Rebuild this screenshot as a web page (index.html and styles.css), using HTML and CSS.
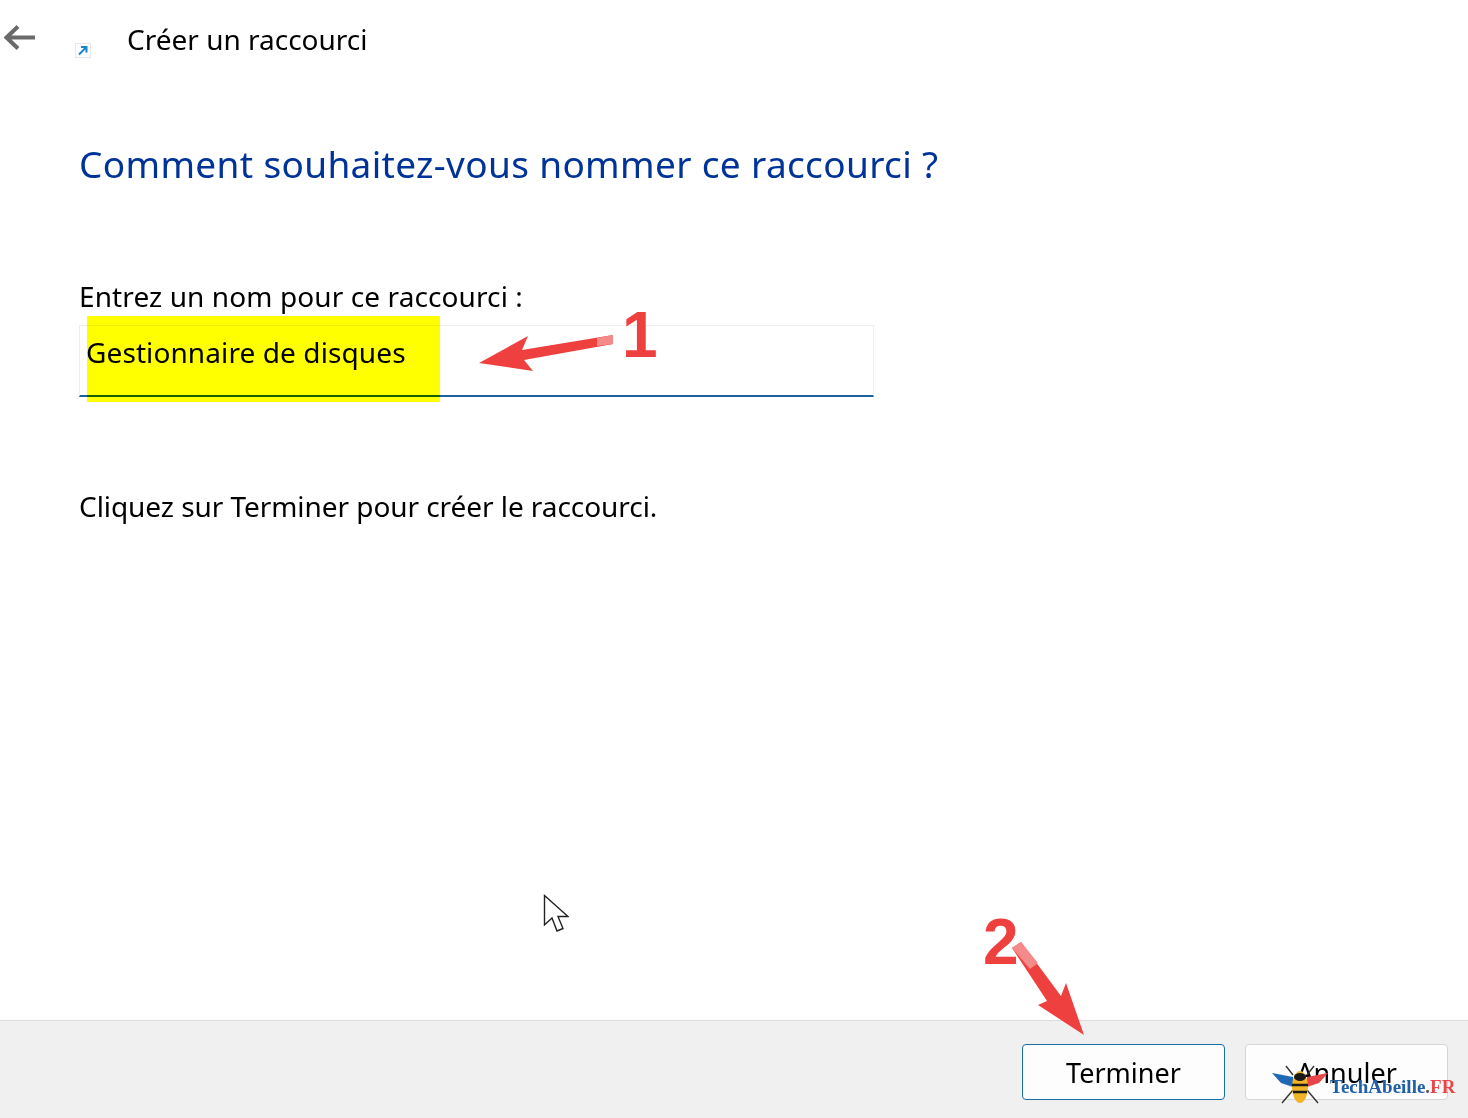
FILE: index.html
```html
<!DOCTYPE html>
<html lang="fr">
<head>
    <meta charset="UTF-8">
    <meta name="viewport" content="width=device-width, initial-scale=1.0">
    <title>Créer un raccourci</title>
    <link rel="stylesheet" href="styles.css">
</head>
<body>
    <div class="wizard">
        <header class="top-bar">
            <svg class="back-arrow" width="32" height="26" viewBox="0 0 32 26">
                <path d="M14 1.5 L2.5 12.5 L14 23.5 M3 12.5 H31" fill="none" stroke="#6a6a6a" stroke-width="4"/>
            </svg>
            <svg class="shortcut-icon" width="16" height="15" viewBox="0 0 16 15">
                <rect x="0.5" y="0.5" width="15" height="14" fill="#fbfdff" stroke="#e4e8ec"/>
                <path d="M4 11.5 L11 4.5 M6 4 H11.5 V9.5" fill="none" stroke="#1a86d0" stroke-width="2"/>
            </svg>
            <span class="top-title">Créer un raccourci</span>
        </header>

        <main class="content">
            <h1 class="heading">Comment souhaitez-vous nommer ce raccourci ?</h1>
            <label class="field-label">Entrez un nom pour ce raccourci :</label>
            <div class="name-field">
                <span class="name-value">Gestionnaire de disques</span>
                <div class="highlight"></div>
            </div>
            <p class="hint">Cliquez sur Terminer pour créer le raccourci.</p>
        </main>

        <footer class="bottom-bar">
            <button class="btn btn-primary">Terminer</button>
            <button class="btn">Annuler</button>
        </footer>
    </div>

    <!-- annotations par dessus la capture -->
    <svg class="note-arrow arrow-one" width="140" height="45" viewBox="0 0 140 45">
        <path d="M136 6 L45 21 L51 7 L2 34 L56 42 L47 31 L136 15 Z" fill="#ef4040"/>
        <path d="M120 9 L136 6 L136 15 L120 17 Z" fill="#f58a8a"/>
    </svg>
    <span class="note-number number-one">1</span>

    <svg class="note-arrow arrow-two" width="80" height="95" viewBox="0 0 80 95">
        <path d="M0 6 L9 0 L49 54 L54 41 L72 93 L26 63 L35 59 Z" fill="#ef4040"/>
        <path d="M0 6 L9 0 L26 21 L18 27 Z" fill="#f58a8a"/>
    </svg>
    <span class="note-number number-two">2</span>

    <svg class="cursor" width="26" height="40" viewBox="0 0 26 40">
        <path d="M1.5 1.5 V31 L9 24 L14 37 L20 34.5 L15 22.5 H25 Z" fill="#fff" stroke="#222" stroke-width="1.4"/>
    </svg>

    <div class="watermark">
        <svg class="bee" width="58" height="44" viewBox="0 0 58 44">
            <path d="M21 13 L14 4 M35 13 L42 4 M21 28 L10 41 M35 28 L46 41" stroke="#333" stroke-width="1.4" fill="none"/>
            <path d="M0 11 L21 15 L21 25 L9 21 Z" fill="#1f69b5"/>
            <path d="M56 11 L35 15 L35 25 L47 21 Z" fill="#e8474a"/>
            <ellipse cx="28" cy="25" rx="8" ry="16" fill="#f0b429"/>
            <path d="M20 23 H36 M21 30 H35" stroke="#1a1a1a" stroke-width="2.5"/>
            <ellipse cx="28" cy="15" rx="6" ry="4" fill="#1a1a1a"/>
        </svg>
        <span class="wm-text"><span class="wm-blue">TechAbeille</span><span class="wm-dot">.</span><span class="wm-red">FR</span></span>
    </div>
</body>
</html>
```

FILE: styles.css
```css
* {
    box-sizing: border-box;
}
html, body {
    margin: 0;
    height: 100%;
    overflow: hidden;
}
body {
    font-family: "Noto Sans", "Open Sans", Arial, sans-serif;
    background-color: #fff;
    color: #000;
    position: relative;
}
.wizard {
    display: flex;
    flex-direction: column;
    height: 1118px;
}

/* barre du haut */
.top-bar {
    display: flex;
    align-items: flex-start;
    height: 80px;
    padding: 25px 0 0 4px;
}
.back-arrow {
    flex: none;
    margin-right: 40px;
}
.shortcut-icon {
    flex: none;
    margin-top: 18px;
    margin-left: -1px;
    margin-right: 36px;
}
.top-title {
    font-size: 28px;
    line-height: 30px;
    margin-top: -1px;
}

/* contenu */
.content {
    flex: 1;
    padding: 0 0 0 79px;
}
.heading {
    font-size: 37px;
    font-weight: 400;
    line-height: 50px;
    letter-spacing: 0.34px;
    color: #003399;
    margin: 59px 0 0;
}
.field-label {
    display: block;
    font-size: 28px;
    line-height: 36px;
    letter-spacing: 0.1px;
    margin-top: 89px;
}
.name-field {
    position: relative;
    width: 795px;
    height: 72px;
    margin-top: 11px;
    padding: 8px 0 0 6px;
    border: 1px solid #eeeeee;
    border-bottom: 2px solid #1a5f9e;
}
.name-value {
    font-size: 28px;
    line-height: 36px;
    letter-spacing: 0.1px;
}
.highlight {
    position: absolute;
    left: 7px;
    top: -10px;
    width: 353px;
    height: 86px;
    background-color: #ffff00;
    mix-blend-mode: multiply;
}
.hint {
    font-size: 28px;
    line-height: 36px;
    letter-spacing: -0.06px;
    margin: 91px 0 0;
}

/* barre du bas */
.bottom-bar {
    display: flex;
    justify-content: flex-end;
    align-items: flex-start;
    gap: 20px;
    height: 98px;
    padding: 23px 20px 0 0;
    background-color: #f0f0f0;
    border-top: 1px solid #dcdcdc;
}
.btn {
    width: 203px;
    height: 56px;
    font-family: inherit;
    font-size: 27px;
    color: #000;
    background-color: #fdfdfd;
    border: 1px solid #d6d6d6;
    border-radius: 4px;
    padding: 0;
}
.btn-primary {
    border-color: #1a6fa8;
}

/* annotations */
.note-arrow, .note-number, .cursor, .watermark {
    position: absolute;
}
.arrow-one {
    left: 477px;
    top: 329px;
}
.number-one {
    left: 622px;
    top: 297px;
}
.arrow-two {
    left: 1012px;
    top: 942px;
}
.number-two {
    left: 983px;
    top: 904px;
}
.note-number {
    font-family: "Liberation Sans", Arial, sans-serif;
    font-weight: 700;
    font-size: 64px;
    line-height: 76px;
    color: #ef4040;
}
.cursor {
    left: 543px;
    top: 894px;
}
.watermark {
    left: 1272px;
    top: 1062px;
    display: flex;
    align-items: center;
}
.wm-text {
    font-family: "Liberation Serif", "Times New Roman", serif;
    font-weight: 700;
    font-size: 19px;
    margin: 6px 0 0 0;
}
.wm-blue {
    color: #1f5fa8;
}
.wm-dot {
    color: #555;
}
.wm-red {
    color: #e8474a;
}
```
